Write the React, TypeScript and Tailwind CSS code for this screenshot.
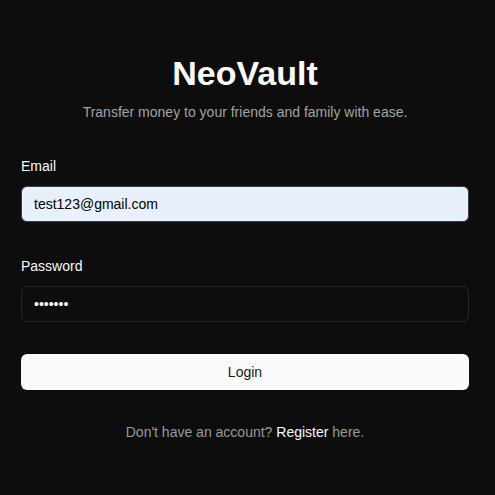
export default function App() {
  return (
    <div className="min-h-screen bg-[#0d0d0d] text-white font-['Liberation_Sans',Arial,sans-serif]">
      <div className="flex w-full flex-col pl-[21px] pr-[26px] pt-[53px]">
        <h1 className="text-center text-[34px] font-bold leading-[40px] text-[#fafafa]">NeoVault</h1>
        <p className="mt-[9px] text-center text-[14px] leading-[20px] text-[#a3a3a3]">
          Transfer money to your friends and family with ease.
        </p>

        <form className="mt-[34px] flex flex-col" onSubmit={(e) => e.preventDefault()}>
          <label className="text-[14px] leading-[20px] text-[#fafafa]">Email</label>
          <input
            type="email"
            readOnly
            value="test123@gmail.com"
            className="mt-[10px] h-[36px] w-full rounded-md border border-[#3a3f4a] bg-[#e8f0fe] px-[12px] text-[14px] text-black outline-none"
          />

          <label className="mt-[34px] text-[14px] leading-[20px] text-[#fafafa]">Password</label>
          <input
            type="password"
            readOnly
            value="1234567"
            className="mt-[10px] h-[36px] w-full rounded-md border border-[#262626] bg-transparent px-[12px] text-[14px] text-white outline-none"
          />

          <button
            type="submit"
            className="mt-[32px] h-[36px] w-full rounded-md bg-[#fafafa] text-[14px] text-[#171717]"
          >
            Login
          </button>
        </form>

        <p className="mt-[32px] text-center text-[14px] leading-[20px] text-[#9a9a9a]">
          Don't have an account? <a className="text-[#fafafa]">Register</a> here.
        </p>
      </div>
    </div>
  );
}
